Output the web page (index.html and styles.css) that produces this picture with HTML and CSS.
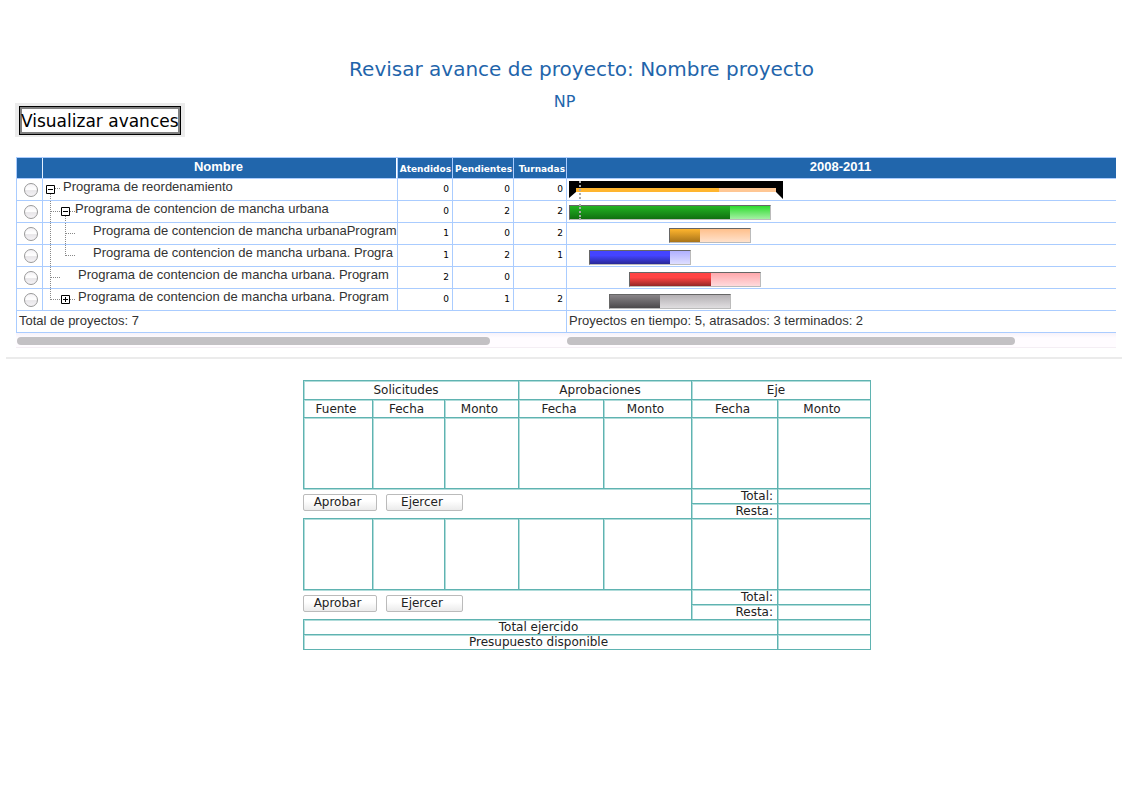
FILE: index.html
```
<!DOCTYPE html>
<html lang="es">
<head>
<meta charset="utf-8">
<title>Revisar avance de proyecto</title>
<link rel="stylesheet" href="styles.css">
</head>
<body>
<main class="page">
  <header class="heading">
    <h1 class="title">Revisar avance de proyecto: Nombre proyecto</h1>
    <p class="code">NP</p>
  </header>
  <div class="toolbar"><button class="view-button" type="button">Visualizar avances</button></div>

  <section class="gantt">
    <table class="plan">
      <colgroup><col class="c-pick"><col class="c-name"><col class="c-att"><col class="c-pen"><col class="c-tur"><col></colgroup>
      <thead>
        <tr><th></th><th class="name-head">Nombre</th><th class="small">Atendidos</th><th class="small">Pendientes</th><th class="small">Turnadas</th><th>2008-2011</th></tr>
      </thead>
      <tbody>
        <tr>
          <td><input class="pick" type="radio" name="p" aria-label="Proyecto 1"></td>
          <td><div class="node"><svg class="tree" width="20" height="21"><path class="dots" d="M7.500 15v6M12 9.500h5"/><path class="box" d="M3.500 6.500h8v8h-8zM5 10.500h5"/></svg><span class="label">Programa de reordenamiento</span></div></td>
          <td class="num">0</td><td class="num">0</td><td class="num">0</td>
          <td><svg class="summary" width="214" height="18"><path d="M0 0h214v18l-7-7H7l-7 6z" fill="#000"/><path d="M7 7h143v4H7z" fill="#ffb52e"/><path d="M150 7h57v4h-57z" fill="#ffc794"/><path d="M11 0v18" stroke="#aaa" stroke-width="2" stroke-dasharray="2 2"/></svg></td>
        </tr>
        <tr>
          <td><input class="pick" type="radio" name="p" aria-label="Proyecto 2"></td>
          <td><div class="node"><svg class="tree" width="32" height="21"><path class="dots" d="M7.500 0v21M8 10.500h10M22.500 15v6M27 10.500h5"/><path class="box" d="M18.500 6.500h8v8h-8zM20 10.500h5"/></svg><span class="label">Programa de contencion de mancha urbana</span></div></td>
          <td class="num">0</td><td class="num">2</td><td class="num">2</td>
          <td><div class="bar green"><span class="done"></span><span class="today"></span></div></td>
        </tr>
        <tr>
          <td><input class="pick" type="radio" name="p" aria-label="Proyecto 3"></td>
          <td><div class="node"><svg class="tree" width="50" height="21"><path class="dots" d="M7.500 0v21M22.500 0v21M23 10.500h10"/></svg><span class="label">Programa de contencion de mancha urbanaProgram</span></div></td>
          <td class="num">1</td><td class="num">0</td><td class="num">2</td>
          <td><div class="bar amber"><span class="done"></span></div></td>
        </tr>
        <tr>
          <td><input class="pick" type="radio" name="p" aria-label="Proyecto 4"></td>
          <td><div class="node"><svg class="tree" width="50" height="21"><path class="dots" d="M7.500 0v21M22.500 0v11M23 10.500h10"/></svg><span class="label">Programa de contencion de mancha urbana. Progra</span></div></td>
          <td class="num">1</td><td class="num">2</td><td class="num">1</td>
          <td><div class="bar blue"><span class="done"></span></div></td>
        </tr>
        <tr>
          <td><input class="pick" type="radio" name="p" aria-label="Proyecto 5"></td>
          <td><div class="node"><svg class="tree" width="35" height="21"><path class="dots" d="M7.500 0v21M8 10.500h10"/></svg><span class="label">Programa de contencion de mancha urbana. Program</span></div></td>
          <td class="num">2</td><td class="num">0</td><td class="num"></td>
          <td><div class="bar red"><span class="done"></span></div></td>
        </tr>
        <tr>
          <td><input class="pick" type="radio" name="p" aria-label="Proyecto 6"></td>
          <td><div class="node"><svg class="tree" width="35" height="21"><path class="dots" d="M7.500 0v11M8 10.500h10M27 10.500h5"/><path class="box" d="M18.500 6.500h8v8h-8zM20 10.500h5M22.500 8v5"/></svg><span class="label">Programa de contencion de mancha urbana. Program</span></div></td>
          <td class="num">0</td><td class="num">1</td><td class="num">2</td>
          <td><div class="bar gray"><span class="done"></span></div></td>
        </tr>
      </tbody>
      <tfoot>
        <tr><td class="sum" colspan="5">Total de proyectos: 7</td><td class="sum">Proyectos en tiempo: 5, atrasados: 3 terminados: 2</td></tr>
      </tfoot>
    </table>
    <div class="scrollers">
      <div class="track"><div class="thumb thumb-names"></div></div>
      <div class="track"><div class="thumb thumb-time"></div></div>
    </div>
  </section>
  <hr class="rule">

  <table class="budget">
    <colgroup><col class="b1"><col class="b2"><col class="b3"><col class="b4"><col class="b5"><col class="b6"><col class="b7"></colgroup>
    <thead>
      <tr class="group"><th colspan="3">Solicitudes</th><th colspan="2">Aprobaciones</th><th colspan="2">Eje</th></tr>
      <tr class="fields"><th>Fuente</th><th>Fecha</th><th>Monto</th><th>Fecha</th><th>Monto</th><th>Fecha</th><th>Monto</th></tr>
    </thead>
    <tbody>
      <tr class="blank"><td></td><td></td><td></td><td></td><td></td><td></td><td></td></tr>
      <tr class="line"><td class="actions" colspan="5" rowspan="2"><div class="buttons"><button class="btn" type="button">Aprobar</button><button class="btn wide" type="button">Ejercer</button></div></td><td class="right">Total:</td><td></td></tr>
      <tr class="line"><td class="right">Resta:</td><td></td></tr>
      <tr class="blank"><td></td><td></td><td></td><td></td><td></td><td></td><td></td></tr>
      <tr class="line"><td class="actions" colspan="5" rowspan="2"><div class="buttons"><button class="btn" type="button">Aprobar</button><button class="btn wide" type="button">Ejercer</button></div></td><td class="right">Total:</td><td></td></tr>
      <tr class="line"><td class="right">Resta:</td><td></td></tr>
      <tr class="line"><td class="final" colspan="6">Total ejercido</td><td></td></tr>
      <tr class="line"><td class="final" colspan="6">Presupuesto disponible</td><td></td></tr>
    </tbody>
  </table>
</main>
</body>
</html>
```
FILE: styles.css
```
* { box-sizing: border-box; }
body { margin: 0; background: #fff; color: #333; font-family: "Liberation Sans", Arial, sans-serif; font-size: 13px; }
.page { padding: 56px 23px 24px 16px; }
.heading { padding-left: 31px; text-align: center; color: #1f65ab; font-family: "DejaVu Sans", sans-serif; }
.title { margin: 0; font-size: 20px; line-height: 26px; font-weight: 400; }
.code { margin: 9px 34px 0 0; font-size: 16px; line-height: 22px; }
.toolbar { width: fit-content; margin: -10px 0 20px -1px; padding: 3px 4px 2px; background: #ebebeb; }
.view-button { display: block; height: 29px; padding: 0 1px; border: 1px solid #000; background: #fff; box-shadow: inset 0 0 0 2px #808080; color: #000; font-family: "DejaVu Sans", sans-serif; font-size: 17px; line-height: 26px; }

.plan { width: 100%; table-layout: fixed; border-collapse: separate; border-spacing: 0; border-top: 1px solid #acf; }
.c-pick { width: 26px; }
.c-name { width: 355px; }
.c-att { width: 55px; }
.c-pen { width: 61px; }
.c-tur { width: 53px; }
.plan th { height: 21px; padding: 0 2px 2px 0; border-left: 1px solid #acf; border-bottom: 1px solid #acf; background: #2166ac; color: #fff; font-size: 13px; line-height: 18px; }
.plan .name-head { border-left-color: #e4f0ff; border-right: 1px solid #fff; }
.plan .small { padding: 2px 1px 0 0; text-align: right; font-family: "DejaVu Sans", sans-serif; font-size: 9px; }
.plan td { height: 22px; padding: 0; border-left: 1px solid #acf; border-bottom: 1px solid #acf; overflow: hidden; vertical-align: top; }
.plan .num { padding: 0 3px; text-align: right; color: #000; font-family: "DejaVu Sans", sans-serif; font-size: 9px; line-height: 20px; }
.plan .sum { padding: 0 2px; line-height: 20px; }
.pick { appearance: none; display: block; width: 14px; height: 14px; margin: 4px 0 0 7px; border: 1px solid #999; border-radius: 50%; background: linear-gradient(#f4f2f5, #fff 45%, #e8e6e9 55%, #f5f3f6); }
.node { display: flex; height: 21px; overflow: hidden; }
.tree { flex: none; }
.dots { fill: none; stroke: #888; stroke-dasharray: 1 1; }
.box { fill: none; stroke: #000; }
.label { line-height: 16px; white-space: nowrap; }
.summary { display: block; margin: 2px 0 0 2px; }
.bar { position: relative; height: 15px; margin-top: 5px; border: 1px solid #bbb; border-top-color: #666; border-left-color: #666; }
.done { display: block; height: 100%; }
.today { position: absolute; left: 9px; top: -2px; height: 16px; border-left: 2px dotted #aaa; }
.green { width: 202px; margin: 4px 0 0 2px; background: linear-gradient(#2edc2e, #a4f0a4); }
.green .done { width: 80%; background: linear-gradient(#22b422, #107010); }
.amber { width: 82px; margin-left: 102px; background: linear-gradient(#ffc08c, #ffe2cc); }
.amber .done { width: 38%; background: linear-gradient(#ffb52e, #a8741a); }
.blue { width: 102px; margin-left: 22px; background: linear-gradient(#b0b0ff, #dedeff); }
.blue .done { width: 80%; background: linear-gradient(#4444ff 35%, #282896); }
.red { width: 132px; margin-left: 62px; background: linear-gradient(#ffa8ac, #ffdadc); }
.red .done { width: 62%; background: linear-gradient(#ff4444 35%, #942626); }
.gray { width: 122px; margin-left: 42px; background: linear-gradient(#b4b0b4, #e0dee0); }
.gray .done { width: 42%; background: linear-gradient(#888488, #4c4a4c); }
.scrollers { display: grid; grid-template-columns: 550px 1fr; }
.track { height: 15px; padding: 4px 1px; border-bottom: 1px solid #f4eef4; background: linear-gradient(#f6f2fa, #fffcff 5px); }
.thumb { height: 8px; border-radius: 4px; background: #c3c1c4; }
.thumb-names { width: 473px; }
.thumb-time { width: 448px; }
.rule { height: 2px; margin: 9px -6px 21px -10px; border: 0; background: #ebebeb; }

.budget { width: 568px; margin-left: 287px; table-layout: fixed; border-collapse: separate; border-spacing: 0; border-bottom: 1px solid #5fb3b1; color: #222; font-family: "DejaVu Sans", sans-serif; font-size: 12px; line-height: 14px; }
.b1 { width: 69px; }
.b2 { width: 72px; }
.b3 { width: 74px; }
.b4 { width: 85px; }
.b5 { width: 88px; }
.b6 { width: 86px; }
.b7 { width: 94px; }
.budget th, .budget td { padding: 0; border: 0 solid #5fb3b1; border-top-width: 1px; border-left-width: 1px; box-shadow: inset 1px 1px #b0dcda; font-weight: 400; text-align: center; }
.budget th:last-child, .budget td:last-child { border-right-width: 1px; }
.group { height: 19px; }
.fields { height: 18px; }
.blank { height: 71px; }
.line { height: 15px; }
.budget .group th { padding-right: 10px; }
.budget .fields th { padding-right: 4px; }
.budget .actions { border-left-width: 0; box-shadow: inset 0 1px #b0dcda; }
.budget .right { padding-right: 4px; text-align: right; }
.budget .final { padding-right: 4px; }
.buttons { display: flex; gap: 9px; padding-bottom: 2px; }
.btn { width: 74px; height: 17px; padding: 0 5px 1px 0; border: 1px solid #bbb; border-radius: 2px; background: linear-gradient(#fff 40%, #ebebeb); color: #222; font-family: "DejaVu Sans", sans-serif; font-size: 12px; line-height: 14px; }
.wide { width: 77px; }
```
